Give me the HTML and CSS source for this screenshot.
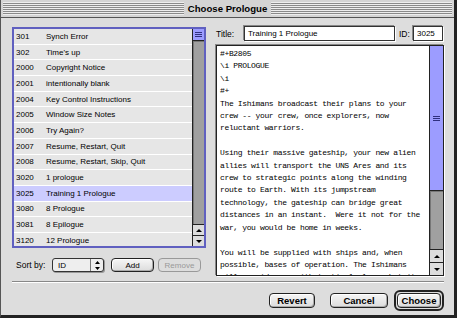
FILE: index.html
```html
<!DOCTYPE html>
<html>
<head>
    <title>Choose Prologue</title>
    <link rel="stylesheet" href="styles.css">
</head>
<body>
    <div class="window">
        <div class="titlebar">
            <span class="stripes"></span>
            <span class="title">Choose Prologue</span>
            <span class="stripes"></span>
        </div>

        <div class="content">
            <div class="top">
                <div class="left-col">
                    <div class="list">
                        <div class="rows">
                            <div class="row"><span class="id">301</span><span>Synch Error</span></div>
                            <div class="row"><span class="id">302</span><span>Time's up</span></div>
                            <div class="row"><span class="id">2000</span><span>Copyright Notice</span></div>
                            <div class="row"><span class="id">2001</span><span>intentionally blank</span></div>
                            <div class="row"><span class="id">2004</span><span>Key Control Instructions</span></div>
                            <div class="row"><span class="id">2005</span><span>Window Size Notes</span></div>
                            <div class="row"><span class="id">2006</span><span>Try Again?</span></div>
                            <div class="row"><span class="id">2007</span><span>Resume, Restart, Quit</span></div>
                            <div class="row"><span class="id">2008</span><span>Resume, Restart, Skip, Quit</span></div>
                            <div class="row"><span class="id">3020</span><span>1 prologue</span></div>
                            <div class="row selected"><span class="id">3025</span><span>Training 1 Prologue</span></div>
                            <div class="row"><span class="id">3080</span><span>8 Prologue</span></div>
                            <div class="row"><span class="id">3081</span><span>8 Epilogue</span></div>
                            <div class="row"><span class="id">3120</span><span>12 Prologue</span></div>
                        </div>
                        <div class="scrollbar small">
                            <div class="thumb short"><span class="grip"></span></div>
                            <div class="track"></div>
                            <div class="arrow up"></div>
                            <div class="arrow down"></div>
                        </div>
                    </div>

                    <div class="sort-row">
                        <span class="label">Sort by:</span>
                        <div class="popup">
                            <span class="popup-value">ID</span>
                            <span class="popup-arrows">
                                <svg width="5" height="9" viewBox="0 0 5 9">
                                    <path d="M2.5 0 L5 3 H0 Z M2.5 9 L5 6 H0 Z" fill="#000"/>
                                </svg>
                            </span>
                        </div>
                        <button class="btn small-btn">Add</button>
                        <button class="btn small-btn" disabled>Remove</button>
                    </div>
                </div>

                <div class="right-col">
                    <div class="fields">
                        <span class="label">Title:</span>
                        <div class="field title-field">Training 1 Prologue</div>
                        <span class="label id-label">ID:</span>
                        <div class="field id-field">3025</div>
                    </div>

                    <div class="editor">
<div class="text">#+B2805
\i PROLOGUE
\i
#+
The Ishimans broadcast their plans to your
crew -- your crew, once explorers, now
reluctant warriors.

Using their massive gateship, your new alien
allies will transport the UNS Ares and its
crew to strategic points along the winding
route to Earth. With its jumpstream
technology, the gateship can bridge great
distances in an instant.  Were it not for the
war, you would be home in weeks.

You will be supplied with ships and, when
possible, bases of operation. The Ishimans
will provide you with tactical plans, but it</div>
                        <div class="scrollbar wide">
                            <div class="thumb long"><span class="grip"></span></div>
                            <div class="track"></div>
                            <div class="arrow up"></div>
                            <div class="arrow down"></div>
                        </div>
                    </div>
                </div>
            </div>

            <div class="separator"></div>

            <div class="buttons">
                <button class="btn big-btn">Revert</button>
                <button class="btn big-btn cancel">Cancel</button>
                <div class="default-ring">
                    <button class="btn big-btn">Choose</button>
                </div>
            </div>
        </div>
    </div>
</body>
</html>
```

FILE: styles.css
```css
body {
    margin: 0;
    padding: 0;
    background: #dddddd;
    font-family: "Liberation Sans", Arial, sans-serif;
}

.window {
    width: 457px;
    height: 318px;
    box-sizing: border-box;
    background: #dddddd;
    border-left: 1px solid #555;
    border-right: 3px solid #222;
    border-bottom: 3px solid #222;
    display: flex;
    flex-direction: column;
    overflow: hidden;
}

/* title bar */
.titlebar {
    height: 18px;
    flex-shrink: 0;
    display: flex;
    align-items: center;
    gap: 3px;
    padding: 0 2px;
    background: #d4d4d4;
    border-bottom: 1px solid #555;
    box-sizing: border-box;
}
.stripes {
    flex: 1;
    height: 12px;
    background: repeating-linear-gradient(to bottom, #eeeeee 0 1px, #8a8a8a 1px 2px);
    border-bottom: 1px solid #eee;
}
.title {
    font-weight: bold;
    font-size: 9.6px;
    color: #000;
    padding: 0 1px;
}

.content {
    flex: 1;
    display: flex;
    flex-direction: column;
    padding: 8px 10px 0 11px;
}

.top {
    display: flex;
    gap: 10px;
    height: 250px;
}

.left-col {
    width: 194px;
    padding-top: 1px;
    display: flex;
    flex-direction: column;
    gap: 10px;
}

/* list */
.list {
    height: 221px;
    box-sizing: border-box;
    border: 2px solid #6060c0;
    display: flex;
    overflow: hidden;
}
.rows {
    flex: 1;
    overflow: hidden;
    background: #e6e6e6;
}
.row {
    height: 15.7px;
    box-sizing: border-box;
    border-bottom: 1px solid #fff;
    display: flex;
    align-items: center;
    padding-left: 2px;
    font-size: 8px;
    color: #000;
    background: #e6e6e6;
}
.row.selected {
    background: #ccccff;
}
.row .id {
    width: 30px;
    flex-shrink: 0;
}

/* scrollbars */
.scrollbar {
    display: flex;
    flex-direction: column;
    border-left: 1px solid #222;
    background: #a0a0a0;
    flex-shrink: 0;
}
.scrollbar.small {
    width: 11px;
}
.scrollbar.wide {
    width: 13px;
    border-right: 1px solid #222;
}
.thumb {
    background: #9c9cff;
    border-bottom: 1px solid #222;
    display: flex;
    align-items: center;
    justify-content: center;
}
.thumb.short {
    height: 11px;
}
.thumb.long {
    height: 144px;
}
.grip {
    width: 7px;
    height: 5px;
    background: repeating-linear-gradient(to bottom, #303080 0 1px, transparent 1px 2px);
}
.track {
    flex: 1;
    box-shadow: inset 1px 1px 0 #777;
}
.arrow {
    height: 10px;
    background: #dddddd;
    border-top: 1px solid #222;
    display: flex;
    align-items: center;
    justify-content: center;
}
.wide .arrow {
    height: 12px;
}
.arrow::after {
    content: "";
    border-left: 3px solid transparent;
    border-right: 3px solid transparent;
}
.arrow.up::after {
    border-bottom: 3px solid #000;
}
.arrow.down::after {
    border-top: 3px solid #000;
}

/* sort row */
.sort-row {
    display: flex;
    align-items: center;
    height: 14px;
    padding-left: 4px;
}
.label {
    font-size: 8.5px;
    color: #000;
}
.sort-row .label {
    width: 36px;
}
.popup {
    width: 52px;
    height: 14px;
    box-sizing: border-box;
    border: 1px solid #333;
    border-radius: 3px;
    background: #eeeeee;
    display: flex;
    align-items: center;
    margin-right: 7px;
    box-shadow: 1px 1px 0 #999;
}
.popup-value {
    flex: 1;
    font-size: 8px;
    padding-left: 5px;
}
.popup-arrows {
    width: 12px;
    height: 12px;
    border-left: 1px solid #777;
    display: flex;
    align-items: center;
    justify-content: center;
}

/* buttons */
.btn {
    font-family: "Liberation Sans", Arial, sans-serif;
    border: 1px solid #222;
    border-radius: 4px;
    background: linear-gradient(#f6f6f6, #dcdcdc);
    color: #000;
    padding: 0;
    box-shadow: inset -1px -1px 0 #aaa, inset 1px 1px 0 #fff;
}
.btn:disabled {
    color: #999;
    border-color: #999;
    box-shadow: none;
    background: #dddddd;
}
.small-btn {
    width: 43px;
    height: 14px;
    font-size: 8px;
    margin-right: 4px;
}
.big-btn {
    width: 46px;
    height: 15px;
    font-size: 9.5px;
    font-weight: bold;
}
.cancel {
    width: 58px;
    margin-left: 15px;
}

/* right column */
.right-col {
    flex: 1;
    display: flex;
    flex-direction: column;
    gap: 4px;
}
.fields {
    display: flex;
    align-items: center;
    height: 15px;
}
.fields .label {
    width: 28px;
}
.fields .id-label {
    width: 14px;
    margin-left: 4px;
}
.field {
    height: 15px;
    box-sizing: border-box;
    background: #fff;
    border: 1px solid #333;
    box-shadow: -1px -1px 0 #888, 1px 1px 0 #fff;
    font-size: 8px;
    display: flex;
    align-items: center;
    padding-left: 3px;
}
.title-field {
    width: 151px;
}
.id-field {
    width: 30px;
}

.editor {
    height: 231px;
    box-sizing: border-box;
    border: 1px solid #222;
    box-shadow: -1px -1px 0 #888, 1px 1px 0 #fff;
    background: #fff;
    display: flex;
    overflow: hidden;
}
.text {
    flex: 1;
    overflow: hidden;
    white-space: pre;
    font-family: "Liberation Mono", "Courier New", monospace;
    font-size: 8px;
    letter-spacing: -0.36px;
    line-height: 12.4px;
    padding: 2px 0 0 3px;
    color: #000;
}
.editor .scrollbar {
    border-right: none;
}

.separator {
    margin-top: 5px;
    height: 1px;
    background: #888;
    border-bottom: 1px solid #fff;
}

.buttons {
    display: flex;
    justify-content: flex-end;
    align-items: center;
    margin-top: 7px;
    padding-right: 0;
}
.default-ring {
    margin-left: 6px;
    border: 2px solid #222;
    border-radius: 6px;
    padding: 1px;
    display: flex;
}
.default-ring .btn {
    width: 44px;
}
```
